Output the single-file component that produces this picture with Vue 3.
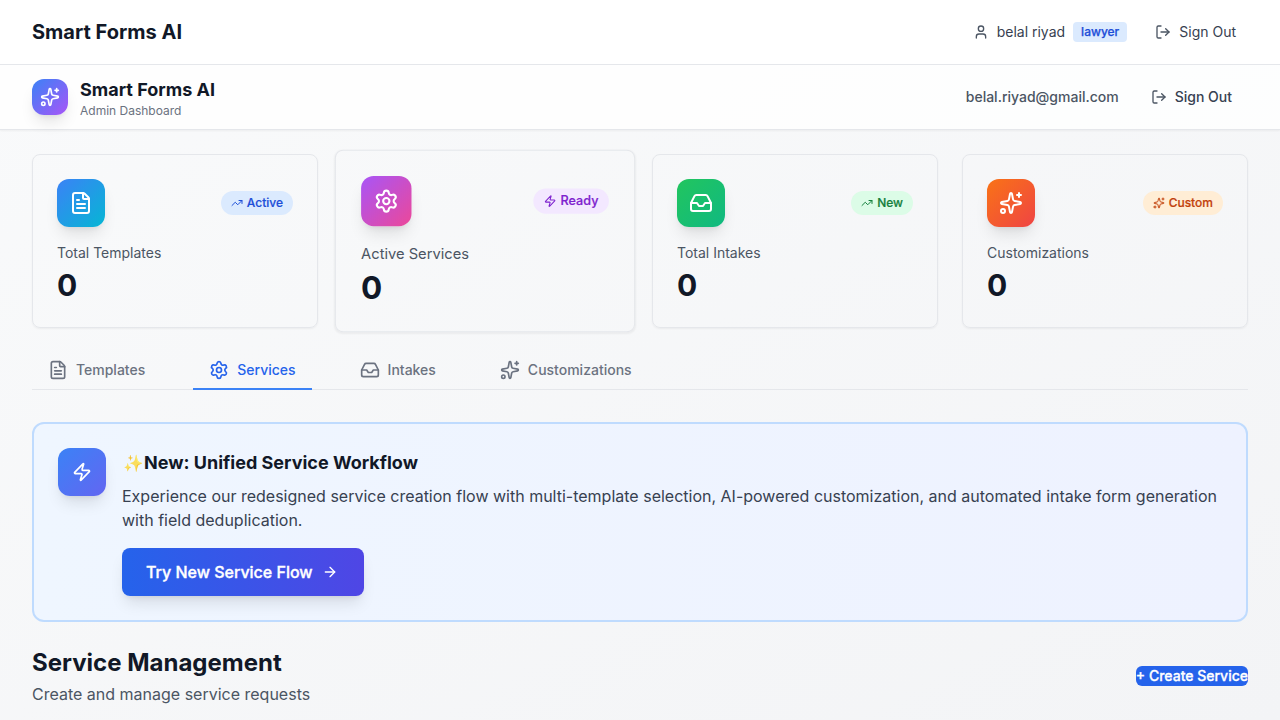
<script setup>
import { h } from 'vue'

const paths = {
  sparkles: [
    'M11.017 2.814a1 1 0 0 1 1.966 0l1.051 5.558a2 2 0 0 0 1.594 1.594l5.558 1.051a1 1 0 0 1 0 1.966l-5.558 1.051a2 2 0 0 0-1.594 1.594l-1.051 5.558a1 1 0 0 1-1.966 0l-1.051-5.558a2 2 0 0 0-1.594-1.594l-5.558-1.051a1 1 0 0 1 0-1.966l5.558-1.051a2 2 0 0 0 1.594-1.594z',
    'M20 2v4', 'M22 4h-4', 'M2 20a2 2 0 1 0 4 0a2 2 0 1 0-4 0'
  ],
  user: ['M19 21v-2a4 4 0 0 0-4-4H9a4 4 0 0 0-4 4v2', 'M8 7a4 4 0 1 0 8 0a4 4 0 1 0-8 0'],
  logout: ['m16 17 5-5-5-5', 'M21 12H9', 'M9 21H5a2 2 0 0 1-2-2V5a2 2 0 0 1 2-2h4'],
  file: [
    'M6 22a2 2 0 0 1-2-2V4a2 2 0 0 1 2-2h8a2.4 2.4 0 0 1 1.704.706l3.588 3.588A2.4 2.4 0 0 1 20 8v12a2 2 0 0 1-2 2z',
    'M14 2v5a1 1 0 0 0 1 1h5', 'M10 9H8', 'M16 13H8', 'M16 17H8'
  ],
  gear: [
    'M9.671 4.136a2.34 2.34 0 0 1 4.659 0 2.34 2.34 0 0 0 3.319 1.915 2.34 2.34 0 0 1 2.33 4.033 2.34 2.34 0 0 0 0 3.831 2.34 2.34 0 0 1-2.33 4.033 2.34 2.34 0 0 0-3.319 1.915 2.34 2.34 0 0 1-4.659 0 2.34 2.34 0 0 0-3.32-1.915 2.34 2.34 0 0 1-2.33-4.033 2.34 2.34 0 0 0 0-3.831A2.34 2.34 0 0 1 6.35 6.051a2.34 2.34 0 0 0 3.319-1.915',
    'M9 12a3 3 0 1 0 6 0a3 3 0 1 0-6 0'
  ],
  inbox: [
    'M22 12h-6l-2 3h-4l-2-3H2',
    'M5.45 5.11 2 12v6a2 2 0 0 0 2 2h16a2 2 0 0 0 2-2v-6l-3.45-6.89A2 2 0 0 0 16.76 4H7.24a2 2 0 0 0-1.79 1.11z'
  ],
  zap: ['M4 14a1 1 0 0 1-.78-1.63l9.9-10.2a.5.5 0 0 1 .86.46l-1.92 6.02A1 1 0 0 0 13 10h7a1 1 0 0 1 .78 1.63l-9.9 10.2a.5.5 0 0 1-.86-.46l1.92-6.02A1 1 0 0 0 11 14z'],
  trend: ['M16 7h6v6', 'm22 7-8.5 8.5-5-5L2 17'],
  arrow: ['M5 12h14', 'm12 5 7 7-7 7']
}

const Icon = (props) =>
  h('svg', {
    width: props.size, height: props.size, viewBox: '0 0 24 24', fill: 'none',
    stroke: 'currentColor', 'stroke-width': 2, 'stroke-linecap': 'round', 'stroke-linejoin': 'round'
  }, paths[props.name].map((d) => h('path', { d })))
Icon.props = ['name', 'size']

const stats = [
  { label: 'Total Templates', icon: 'file', tone: 'blue', badge: 'Active', badgeIcon: 'trend' },
  { label: 'Active Services', icon: 'gear', tone: 'purple', badge: 'Ready', badgeIcon: 'zap', raised: true },
  { label: 'Total Intakes', icon: 'inbox', tone: 'green', badge: 'New', badgeIcon: 'trend' },
  { label: 'Customizations', icon: 'sparkles', tone: 'orange', badge: 'Custom', badgeIcon: 'sparkles' }
]

const tabs = [
  { label: 'Templates', icon: 'file' },
  { label: 'Services', icon: 'gear', active: true },
  { label: 'Intakes', icon: 'inbox' },
  { label: 'Customizations', icon: 'sparkles' }
]
</script>

<template>
  <div class="page">
    <nav class="topbar">
      <div class="site-name">Smart Forms AI</div>
      <div class="actions">
        <div class="user">
          <Icon name="user" :size="16" />
          <span>belal riyad</span>
          <span class="role">lawyer</span>
        </div>
        <button class="signout"><Icon name="logout" :size="16" />Sign Out</button>
      </div>
    </nav>

    <header class="subbar">
      <div class="brand">
        <div class="logo"><Icon name="sparkles" :size="20" /></div>
        <div>
          <div class="brand-name">Smart Forms AI</div>
          <div class="brand-sub">Admin Dashboard</div>
        </div>
      </div>
      <div class="actions">
        <span class="email">belal.riyad@gmail.com</span>
        <button class="signout wide"><Icon name="logout" :size="16" />Sign Out</button>
      </div>
    </header>

    <main class="content">
      <section class="stats">
        <article v-for="s in stats" :key="s.label" class="card" :class="{ raised: s.raised }">
          <div class="card-top">
            <div class="tile" :class="s.tone"><Icon :name="s.icon" :size="24" /></div>
            <span class="badge" :class="s.tone"><Icon :name="s.badgeIcon" :size="12" />{{ s.badge }}</span>
          </div>
          <div class="card-label">{{ s.label }}</div>
          <div class="card-value">0</div>
        </article>
      </section>

      <nav class="tabs">
        <button v-for="t in tabs" :key="t.label" class="tab" :class="{ active: t.active }">
          <Icon :name="t.icon" :size="20" />{{ t.label }}
        </button>
      </nav>

      <section class="banner">
        <div class="tile indigo"><Icon name="zap" :size="20" /></div>
        <div class="banner-body">
          <h3><span class="emoji">✨</span>New: Unified Service Workflow</h3>
          <p>Experience our redesigned service creation flow with multi-template selection, AI-powered customization, and automated intake form generation with field deduplication.</p>
          <button class="cta">Try New Service Flow<Icon name="arrow" :size="16" /></button>
        </div>
      </section>

      <section class="manage">
        <div>
          <h2>Service Management</h2>
          <p>Create and manage service requests</p>
        </div>
        <button class="create">+ Create Service</button>
      </section>
    </main>
  </div>
</template>

<style>
html, body { margin: 0; height: 720px; overflow: hidden; }
</style>

<style scoped>
* { box-sizing: border-box; }
.page {
  height: 720px;
  overflow: hidden;
  font-family: Inter, "Liberation Sans", sans-serif;
  font-size: 16px;
  line-height: 24px;
  color: #111827;
  background: linear-gradient(to bottom right, #f9fafb, #f3f4f6);
}
svg { display: block; flex: none; }
h2, h3, p { margin: 0; }
button { font: inherit; border: 0; background: none; padding: 0; color: inherit; white-space: nowrap; }
.topbar, .subbar {
  height: 65px;
  padding: 0 32px;
  display: flex;
  align-items: center;
  justify-content: space-between;
  background: #fff;
  border-bottom: 1px solid #e5e7eb;
}
.subbar { background: rgba(255, 255, 255, .8); box-shadow: 0 1px 2px rgba(0, 0, 0, .05); }
.site-name { font-size: 20px; line-height: 28px; font-weight: 700; }
.actions { display: flex; align-items: center; gap: 16px; font-size: 14px; line-height: 20px; color: #374151; }
.actions svg { color: #4b5563; }
.user { display: flex; align-items: center; gap: 8px; }
.role { padding: 2px 8px; border-radius: 4px; background: #dbeafe; color: #1d4ed8; font-size: 12px; line-height: 16px; font-weight: 500; -webkit-text-stroke: .25px currentColor; }
.signout { display: flex; align-items: center; gap: 8px; padding: 8px 12px; }
.signout.wide { padding: 8px 16px; font-weight: 500; }
.email { font-weight: 500; color: #4b5563; }
.brand { display: flex; align-items: center; gap: 12px; }
.logo {
  width: 36px; height: 36px; border-radius: 12px; color: #fff;
  display: flex; align-items: center; justify-content: center;
  background: linear-gradient(to bottom right, #3b82f6, #a855f7);
  box-shadow: 0 10px 15px -3px rgba(0, 0, 0, .1), 0 4px 6px -4px rgba(0, 0, 0, .1);
}
.brand-name { font-size: 18px; line-height: 30px; margin-bottom: -2px; font-weight: 700; }
.brand-sub { font-size: 12px; line-height: 16px; color: #6b7280; }
.content { padding: 24px 32px 0; }
.stats { display: grid; grid-template-columns: repeat(4, 1fr); gap: 24px; }
.card { padding: 24px; border: 1px solid #e5e7eb; border-radius: 8px; box-shadow: 0 1px 2px rgba(0, 0, 0, .05); }
.card.raised { transform: scale(1.05); }
.card-top { display: flex; align-items: center; justify-content: space-between; margin-bottom: 16px; }
.tile {
  width: 48px; height: 48px; flex: none; border-radius: 12px; color: #fff;
  display: flex; align-items: center; justify-content: center;
  box-shadow: 0 10px 15px -3px rgba(0, 0, 0, .1), 0 4px 6px -4px rgba(0, 0, 0, .1);
}
.tile.blue { background: linear-gradient(to bottom right, #3b82f6, #06b6d4); }
.tile.purple { background: linear-gradient(to bottom right, #a855f7, #ec4899); }
.tile.green { background: linear-gradient(to bottom right, #22c55e, #10b981); }
.tile.orange { background: linear-gradient(to bottom right, #f97316, #ef4444); }
.tile.indigo { background: linear-gradient(to bottom right, #3b82f6, #6366f1); }
.badge { display: flex; align-items: center; gap: 4px; padding: 4px 10px; border-radius: 12px; font-size: 12px; line-height: 16px; font-weight: 500; -webkit-text-stroke: .2px currentColor; }
.badge.blue { background: #dbeafe; color: #1d4ed8; }
.badge.purple { background: #f3e8ff; color: #7e22ce; }
.badge.green { background: #dcfce7; color: #15803d; }
.badge.orange { background: #ffedd5; color: #c2410c; }
.card-label { font-size: 14px; line-height: 20px; color: #4b5563; margin-bottom: 4px; }
.card-value { font-size: 30px; line-height: 36px; font-weight: 700; }
.tabs { display: flex; gap: 32px; margin-top: 24px; border-bottom: 1px solid #e5e7eb; }
.tab {
  display: flex; align-items: center; gap: 8px; padding: 8px 16px; margin-bottom: -1px;
  border-bottom: 2px solid transparent; font-size: 14px; line-height: 20px; font-weight: 500; color: #6b7280;
}
.tab.active { color: #2563eb; border-bottom-color: #3b82f6; }
.banner {
  margin-top: 32px; padding: 24px; display: flex; gap: 16px;
  border: 2px solid #bfdbfe; border-radius: 12px;
  background: linear-gradient(to right, #eff6ff, #eef2ff);
}
.banner h3 { font-size: 18px; line-height: 30px; font-weight: 700; margin-bottom: 6px; display: flex; }
.emoji { width: 22px; flex: none; font-size: 16.5px; padding-left: 1px; opacity: .8; }
.banner p { color: #374151; margin-bottom: 16px; }
.cta {
  display: flex; align-items: center; gap: 9.5px; height: 48px; padding: 0 26px 0 24px;
  border-radius: 8px; color: #fff; font-weight: 500; -webkit-text-stroke: .35px currentColor;
  background: linear-gradient(to right, #2563eb, #4f46e5);
  box-shadow: 0 10px 15px -3px rgba(0, 0, 0, .1), 0 4px 6px -4px rgba(0, 0, 0, .1);
}
.manage { margin-top: 24px; display: flex; align-items: center; justify-content: space-between; }
.manage h2 { font-size: 24px; line-height: 34px; font-weight: 700; margin-bottom: 2px; }
.manage p { color: #4b5563; }
.create { height: 20px; border-radius: 6px; background: #2563eb; color: #fff; font-size: 14px; line-height: 20px; font-weight: 500; -webkit-text-stroke: .3px currentColor; }
</style>
